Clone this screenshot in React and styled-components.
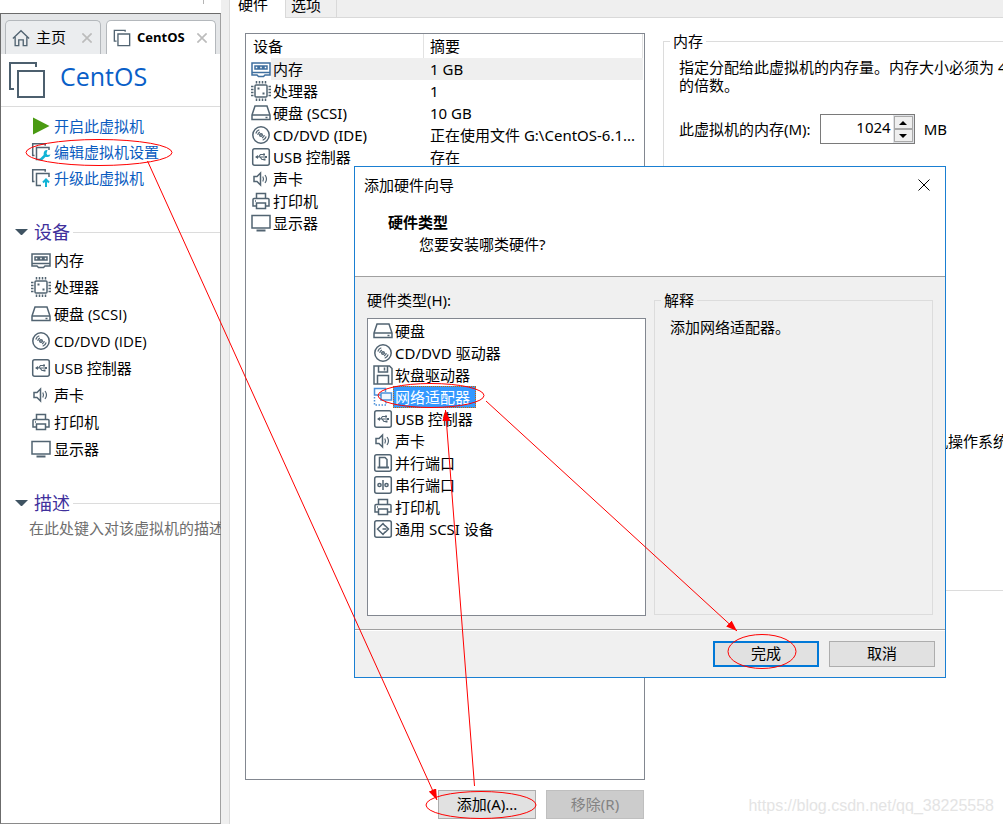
import React, { useState } from 'react'
import styled, { createGlobalStyle } from 'styled-components';

const GlobalStyle = createGlobalStyle`
    * {
        box-sizing: border-box;
    }
    body {
        margin: 0;
        background-color: #fff;
        color: #000;
        font-family: "Noto Sans", "Noto Sans CJK SC", sans-serif;
        font-size: 15px;
        line-height: 22px;
    }
    button, input {
        font: inherit;
        color: inherit;
    }
    ul {
        margin: 0;
        padding: 0;
        list-style: none;
    }
    svg {
        display: block;
        flex: none;
    }
`;

const Page = styled.div`
    display: flex;
    position: relative;
    min-height: 100vh;
    overflow: hidden;
`;

/* library window */

const Sidebar = styled.aside`
    flex: none;
    width: 221px;
    display: flex;
    flex-direction: column;
    overflow: hidden;
    font-family: "Open Sans", "Noto Sans CJK SC", sans-serif;
    white-space: nowrap;
`;

const TopStrip = styled.div`
    height: 13px;
    padding-left: 203px;
`;

const Tick = styled.div`
    width: 1px;
    height: 4px;
    background-color: #b5b5b5;
`;

const Library = styled.div`
    flex: 1;
    border: 1px solid #6b6b6b;
    border-right-color: #a0a0a0;
    border-bottom-color: #8a8a8a;
`;

const VmTabs = styled.div`
    display: flex;
    gap: 5px;
    height: 40px;
    padding: 6px 4px 0 4px;
    background-color: #e4e6e8;
`;

const VmTab = styled.div`
    flex: ${props => props.$active ? "1" : "none"};
    width: ${props => props.$active ? "auto" : "96px"};
    display: flex;
    align-items: center;
    padding: 0 8px 0 6px;
    border: 1px solid #b4b8bc;
    border-bottom: 0;
    border-radius: 5px 5px 0 0;
    background-color: ${props => props.$active ? "#fff" : "#ebedef"};
    font-weight: ${props => props.$active ? "bold" : "normal"};
    font-size: ${props => props.$active ? "13px" : "15px"};
`;

const TabLabel = styled.span`
    flex: 1;
    padding: 0 0 2px 6px;
`;

const IconButton = styled.button`
    display: flex;
    padding: 0;
    border: 0;
    background: none;
`;

const VmHeader = styled.div`
    display: flex;
    align-items: center;
    gap: 15px;
    height: 53px;
    padding: 0 8px;
    border-bottom: 1px solid #dcdcdc;
`;

const VmName = styled.h1`
    margin: 0;
    padding-bottom: 8px;
    color: #0a5fc8;
    font-size: 25px;
    font-weight: normal;
    line-height: 32px;
`;

const Actions = styled.nav`
    display: flex;
    flex-direction: column;
    padding: 6px 0 28px 30px;
`;

const Action = styled.a`
    display: flex;
    align-items: center;
    gap: 3px;
    height: 26px;
    color: #0a5cc0;
    text-decoration: none;
`;

const SectionHead = styled.h2`
    display: flex;
    align-items: center;
    gap: 6px;
    height: 26px;
    margin: 0;
    padding-left: 14px;
    color: #40309c;
    font-size: 18px;
    font-weight: normal;

    &::after {
        content: "";
        flex: 1;
        height: 1px;
        margin-left: -3px;
        background-color: #dcdcdc;
    }
`;

const DeviceSummary = styled.ul`
    padding: 1px 0 28px 30px;
`;

const SummaryRow = styled.li`
    display: flex;
    align-items: center;
    gap: 3px;
    height: 27px;
`;

const Notes = styled.p`
    margin: 0;
    padding: 1px 0 0 28px;
    color: #6e6e6e;
`;

const Gutter = styled.div`
    flex: none;
    width: 9px;
    border-right: 1px solid #dadada;
    background-color: #efefef;
`;

/* settings window */

const Settings = styled.main`
    flex: 1;
    min-width: 0;
    display: flex;
    flex-direction: column;
    overflow: hidden;
`;

const SettingsTabs = styled.div`
    display: flex;
    align-items: flex-end;
    height: 18px;
    overflow: hidden;
    background-color: #efefef;
    box-shadow: inset 0 -1px #d9d9d9;
`;

const SettingsTab = styled.button`
    flex: none;
    width: ${props => props.$active ? "56px" : "51px"};
    height: 24px;
    padding: 0 0 ${props => props.$active ? "4px 8px" : "1px 5px"};
    border: 0;
    border-right: 1px solid #d9d9d9;
    border-bottom: ${props => props.$active ? "0" : "1px solid #d9d9d9"};
    background-color: ${props => props.$active ? "#fff" : "#efefef"};
    line-height: 18px;
    text-align: left;
`;

const SettingsBody = styled.div`
    flex: 1;
    display: grid;
    grid-template-columns: 400px minmax(0, 1fr);
    gap: 18px;
    padding: 15px 0 5px 15px;
`;

const Devices = styled.div`
    display: flex;
    flex-direction: column;
    gap: 10px;
`;

const DeviceBox = styled.div`
    flex: 1;
    padding-right: 1px;
    border: 1px solid #828790;
`;

const DeviceTable = styled.table`
    width: 100%;
    border-collapse: separate;
    border-spacing: 0;
    table-layout: fixed;
`;

const HeadCell = styled.th`
    height: 24px;
    padding: 0 0 1px ${props => props.$first ? "7px" : "6px"};
    border-right: 1px solid #e2e2e2;
    font-weight: normal;
    line-height: 20px;
    text-align: left;
`;

const Cell = styled.td`
    height: 22px;
    padding: 0 0 0 ${props => props.$pad}px;
    background-color: ${props => props.$shaded ? "#efefef" : "transparent"};
    line-height: 20px;
    white-space: nowrap;
`;

const DeviceButtons = styled.div`
    display: flex;
    justify-content: flex-end;
    gap: 10px;
    padding-right: 1px;
`;

const Button = styled.button`
    width: ${props => props.$wide ? "106px" : "98px"};
    height: ${props => props.$wide ? "26px" : "29px"};
    padding: 0 0 2px;
    border: ${props => props.$primary ? "2px solid #0078d7" : "1px solid #adadad"};
    background-color: #e1e1e1;
    line-height: 20px;

    &:disabled {
        border-color: #bfbfbf;
        background-color: #cccccc;
        color: #838383;
    }
`;

const MemoryGroup = styled.fieldset`
    min-width: 0;
    height: 559px;
    margin: -1px -2px 0 0;
    padding: 8px 0 0 15px;
    border: 1px solid #dcdcdc;
    overflow: hidden;
    white-space: nowrap;
`;

const Legend = styled.legend`
    margin-left: -9px;
    padding: 0 3px;
    line-height: 18px;
`;

const MemoryText = styled.p`
    margin: 0;
    line-height: 18px;
`;

const MemoryRow = styled.div`
    display: flex;
    align-items: center;
    gap: 9px;
    margin-top: 20px;
`;

const Spinner = styled.div`
    display: flex;
    width: 95px;
    height: 30px;
    border: 1px solid #7a7a7a;
`;

const SpinnerInput = styled.input`
    flex: 1;
    min-width: 0;
    padding: 0 2px 4px 0;
    border: 0;
    outline: 0;
    text-align: right;
`;

const SpinnerButtons = styled.div`
    display: flex;
    flex-direction: column;
    width: 21px;
    padding: 1px;
    background-color: #dfe1e5;
`;

const SpinnerButton = styled.button`
    flex: 1;
    display: flex;
    align-items: center;
    justify-content: center;
    padding: 0;
    border: 1px solid #a9a9a9;
    background-color: #efefef;
`;

const GuestHint = styled.p`
    margin: 286px 0 0 224px;
`;

/* wizard */

const Dialog = styled.section`
    position: absolute;
    top: 166px;
    left: 354px;
    width: 592px;
    border: 1px solid #1a7fd2;
    background-color: #f0f0f0;
`;

const DialogHead = styled.header`
    height: 110px;
    border-bottom: 1px solid #a0a0a0;
    background-color: #fff;
`;

const TitleBar = styled.div`
    display: flex;
    align-items: center;
    justify-content: space-between;
    height: 36px;
    padding: 0 15px 0 9px;
`;

const DialogTitle = styled.span`
    padding-bottom: 1px;
    font-family: "Open Sans", "Noto Sans CJK SC", sans-serif;
`;

const StepTitle = styled.h2`
    margin: 8px 0 0 33px;
    font-size: 15px;
    line-height: 22px;
`;

const StepText = styled.p`
    margin: 0 0 0 64px;
`;

const DialogBody = styled.div`
    display: grid;
    grid-template-columns: 1fr 1fr;
    gap: 8px;
    padding: 12px 12px 13px;
    border-bottom: 1px solid #a0a0a0;
`;

const TypeColumn = styled.div`
    display: flex;
    flex-direction: column;
    gap: 7px;
`;

const TypeList = styled.ul`
    height: 298px;
    padding: 1px 0 0 5px;
    border: 1px solid #828790;
    background-color: #fff;
`;

const TypeItem = styled.li`
    display: flex;
    align-items: center;
    height: 22px;
    cursor: default;
`;

const TypeName = styled.span`
    height: 22px;
    padding: ${props => props.$selected ? "0 5px 0 1px" : "0 6px 0 2px"};
    border: ${props => props.$selected ? "1px dotted #cc6600" : "0"};
    background-color: ${props => props.$selected ? "#3399ff" : "transparent"};
    color: ${props => props.$selected ? "#fff" : "#000"};
    line-height: ${props => props.$selected ? "20px" : "22px"};
`;

const Explain = styled.fieldset`
    min-width: 0;
    margin: 2px 0 1px;
    padding: 7px 15px;
    border: 1px solid #dcdcdc;
`;

const DialogFoot = styled.footer`
    display: flex;
    justify-content: flex-end;
    gap: 10px;
    padding: 10px 10px;
    border-top: 1px solid #fff;
`;

const Marks = styled.svg`
    position: absolute;
    top: 0;
    left: 0;
    pointer-events: none;
`;

const Watermark = styled.span`
    position: absolute;
    right: 9px;
    bottom: 7px;
    color: #e4e4e4;
    font-family: "Liberation Sans", sans-serif;
    font-size: 16px;
`;

const shapes = {
    memory: <>
        <path d="M1 4h18v12h-5l-1.5 1.5h-5L6 16H1z" />
        <path d="M1 13.5h18" />
        <path d="M4 7h3v3H4zM8.5 7h3v3h-3zM13 7h3v3h-3z" />
    </>,
    cpu: <>
        <rect x="4" y="4" width="12" height="12" rx="1" />
        <path d="M5.5 0v2.5M8.5 0v2.5M11.5 0v2.5M14.5 0v2.5M5.5 17.5V20M8.5 17.5V20M11.5 17.5V20M14.5 17.5V20M0 5.5h2.5M0 8.5h2.5M0 11.500h2.5M0 14.5h2.5M17.5 5.5H20M17.5 8.5H20M17.5 11.5H20M17.5 14.5H20" />
        <path d="M6.5 7.5h2M11.5 12.500h2" strokeWidth="2" />
    </>,
    disk: <>
        <path d="M1 12 4 3h12l3 9v4.5H1z" />
        <path d="M1 12h18M14.5 14.5h2" />
    </>,
    cd: <>
        <circle cx="10" cy="10" r="8.2" />
        <circle cx="10" cy="10" r="1.3" />
        <path d="M4.8 8.5a5.500 5.500 0 0 1 3.500-3.700M15.200 11.500a5.500 5.500 0 0 1-3.500 3.700M6.800 10A3.200 3.200 0 0 1 9 7M13.200 10A3.200 3.200 0 0 1 11 13" strokeWidth="1.2" />
    </>,
    usb: <>
        <rect x="1.7" y="1.7" width="16.6" height="16.6" rx="2" />
        <path d="M5 10h9M7.500 10l2-2.500h2.500M9 10l2 2.500h2" strokeWidth="1.2" />
        <path d="M4 10l3-2v4zM14 9h2v2h-2zM12 6.500h2v2h-2zM12.500 11.500h2v2h-2z" fill="currentColor" strokeWidth="0" />
    </>,
    sound: <>
        <path d="M3 7.500h3L9.500 4v12L6 12.500H3z" />
        <path d="M11.800 7.500q1.400 2.500 0 5M14 6q3 4 0 8" strokeWidth="1.200" />
    </>,
    printer: <>
        <path d="M5.500 7V2.500h9V7M5.500 15H2V8.500q0-1 1-1h14q1 0 1 1V15h-3.500" />
        <rect x="5.500" y="12" width="9" height="5.500" />
        <path d="M4 10h1" />
    </>,
    monitor: <>
        <rect x="1" y="2.500" width="18" height="12.500" />
        <path d="M5.500 17.500h9" strokeWidth="2" />
    </>,
    floppy: <>
        <path d="M1 1h15.500L19 3.500V19H1z" />
        <path d="M5.500 1v6h9V1M11.500 2.500v3M4.500 19v-8.500h11V19" />
    </>,
    network: <g stroke="#4a90d9">
        <path d="M8 8H1.500V1.500h11V5" />
        <path d="M1.500 10v8h11.500v-3" strokeDasharray="1.500 1.500" />
        <rect x="8" y="6" width="10.500" height="7" fill="#eef5fc" />
    </g>,
    parallel: <>
        <rect x="1.700" y="1.700" width="16.600" height="16.600" rx="2" />
        <path d="M6.500 14V4.500h5.500l2 2V14" />
        <path d="M4.500 14.500h11.500" strokeWidth="2" />
    </>,
    serial: <>
        <rect x="1.700" y="1.700" width="16.600" height="16.600" rx="2" />
        <path d="M10 5v10" />
        <circle cx="6.500" cy="10" r="1.600" />
        <circle cx="13.500" cy="10" r="1.600" />
    </>,
    scsi: <>
        <rect x="1.700" y="1.700" width="16.600" height="16.600" rx="2" />
        <path d="M12 7l-2-2.500L4.500 10l5.500 5.500 2-2.500M9.500 10h4M12 6.500l3.500 3.500-3.500 3.500" />
    </>,
    play: <path d="M2 1.500v17L18.500 10z" fill="#4a9a12" stroke="none" />,
    edit: <>
        <path d="M3.500 13.500H1.700V1.700h12.500v2M10 17.500H5.500v-12h12.500V8" />
        <path d="M9.500 18l5-5" stroke="#12b4d6" strokeWidth="2.500" />
        <path d="M16.500 8a3.500 3.500 0 1 0 3 4.500l-3 .5-1-1.500z" fill="#12b4d6" stroke="none" />
    </>,
    upgrade: <>
        <path d="M3.500 13.500H1.700V1.700h12.500v2M10 17.500H5.500v-12h12.500V9" />
        <path d="M15 19v-7M12 14.500l3-3 3 3" stroke="#12b4d6" strokeWidth="2" />
    </>,
    vm: <path d="M4 13.500H1.500v-12h12V3M5.500 5.500h13v13h-13z" />,
    home: <path d="M1 10.500 10 2l9 8.500M3.500 9v9.500h4V12h5v6.500h4V9" />,
};

const Icon = ({ name, size = 20, color = "#526472" }) => (
    <svg width={size} height={size} viewBox="0 0 20 20" fill="none" color={color} stroke="currentColor" strokeWidth="1.5" aria-hidden="true">
        {shapes[name]}
    </svg>
)

const Cross = ({ size, color, width = 1 }) => (
    <svg width={size} height={size} viewBox="0 0 12 12" stroke={color} strokeWidth={width} aria-hidden="true">
        <path d="M0.5 0.5l11 11M11.5 0.5l-11 11" />
    </svg>
)

const Triangle = ({ up, width = 8, color = "#000" }) => (
    <svg width={width} height={width / 2} viewBox="0 0 8 4" fill={color} aria-hidden="true">
        <path d={up ? "M0 4h8L4 0z" : "M0 0h8L4 4z"} />
    </svg>
)

const devices = [
    { icon: "memory", name: "内存", summary: "1 GB" },
    { icon: "cpu", name: "处理器", summary: "1" },
    { icon: "disk", name: "硬盘 (SCSI)", summary: "10 GB" },
    { icon: "cd", name: "CD/DVD (IDE)", summary: "正在使用文件 G:\\CentOS-6.1..." },
    { icon: "usb", name: "USB 控制器", summary: "存在" },
    { icon: "sound", name: "声卡", summary: "" },
    { icon: "printer", name: "打印机", summary: "" },
    { icon: "monitor", name: "显示器", summary: "" },
];

const hardwareTypes = [
    { icon: "disk", name: "硬盘" },
    { icon: "cd", name: "CD/DVD 驱动器" },
    { icon: "floppy", name: "软盘驱动器" },
    { icon: "network", name: "网络适配器" },
    { icon: "usb", name: "USB 控制器" },
    { icon: "sound", name: "声卡" },
    { icon: "parallel", name: "并行端口" },
    { icon: "serial", name: "串行端口" },
    { icon: "printer", name: "打印机" },
    { icon: "scsi", name: "通用 SCSI 设备" },
];

const LibraryPanel = () => (
    <Sidebar>
        <TopStrip><Tick /></TopStrip>
        <Library>
            <VmTabs>
                <VmTab>
                    <Icon name="home" size={18} />
                    <TabLabel>主页</TabLabel>
                    <IconButton aria-label="关闭主页"><Cross size={10} color="#bcbcbc" width={2} /></IconButton>
                </VmTab>
                <VmTab $active>
                    <Icon name="vm" size={18} />
                    <TabLabel>CentOS</TabLabel>
                    <IconButton aria-label="关闭 CentOS"><Cross size={10} color="#bcbcbc" width={2} /></IconButton>
                </VmTab>
            </VmTabs>
            <VmHeader>
                <svg width="36" height="36" viewBox="0 0 36 36" fill="none" stroke="#4c5f6e" strokeWidth="2" aria-hidden="true">
                    <path d="M5 27H1V1h26v4M9 9h26v26H9z" />
                </svg>
                <VmName>CentOS</VmName>
            </VmHeader>
            <Actions>
                <Action href="#start"><Icon name="play" />开启此虚拟机</Action>
                <Action href="#edit"><Icon name="edit" />编辑虚拟机设置</Action>
                <Action href="#upgrade"><Icon name="upgrade" />升级此虚拟机</Action>
            </Actions>
            <SectionHead><Triangle width={13} color="#3f5362" />设备</SectionHead>
            <DeviceSummary>
                {devices.map(device => (
                    <SummaryRow key={device.icon}>
                        <Icon name={device.icon} />
                        {device.name}
                    </SummaryRow>
                ))}
            </DeviceSummary>
            <SectionHead><Triangle width={13} color="#3f5362" />描述</SectionHead>
            <Notes>在此处键入对该虚拟机的描述</Notes>
        </Library>
    </Sidebar>
)

const SettingsPanel = () => {
    const [memory, setMemory] = useState(1024);

    return (
        <Settings>
            <SettingsTabs role="tablist">
                <SettingsTab role="tab" aria-selected="true" $active>硬件</SettingsTab>
                <SettingsTab role="tab" aria-selected="false">选项</SettingsTab>
            </SettingsTabs>
            <SettingsBody>
                <Devices>
                    <DeviceBox>
                        <DeviceTable>
                            <colgroup>
                                <col width="25" />
                                <col width="153" />
                                <col />
                            </colgroup>
                            <thead>
                                <tr>
                                    <HeadCell colSpan="2" $first>设备</HeadCell>
                                    <HeadCell>摘要</HeadCell>
                                </tr>
                            </thead>
                            <tbody>
                                {devices.map((device, i) => (
                                    <tr key={device.icon}>
                                        <Cell $pad={5}>
                                            <Icon name={device.icon} color={i === 0 ? "#3f6f9f" : undefined} />
                                        </Cell>
                                        <Cell $pad={2} $shaded={i === 0}>{device.name}</Cell>
                                        <Cell $pad={6} $shaded={i === 0}>{device.summary}</Cell>
                                    </tr>
                                ))}
                            </tbody>
                        </DeviceTable>
                    </DeviceBox>
                    <DeviceButtons>
                        <Button>添加(A)...</Button>
                        <Button disabled>移除(R)</Button>
                    </DeviceButtons>
                </Devices>
                <MemoryGroup>
                    <Legend>内存</Legend>
                    <MemoryText>指定分配给此虚拟机的内存量。内存大小必须为 4 MB<br />的倍数。</MemoryText>
                    <MemoryRow>
                        <label htmlFor="memory">此虚拟机的内存(M):</label>
                        <Spinner>
                            <SpinnerInput id="memory" value={memory} onChange={e => setMemory(Number(e.target.value) || 0)} />
                            <SpinnerButtons>
                                <SpinnerButton aria-label="增加" onClick={() => setMemory(memory + 4)}><Triangle up /></SpinnerButton>
                                <SpinnerButton aria-label="减少" onClick={() => setMemory(memory - 4)}><Triangle /></SpinnerButton>
                            </SpinnerButtons>
                        </Spinner>
                        <span>MB</span>
                    </MemoryRow>
                    <GuestHint>客户机操作系统</GuestHint>
                </MemoryGroup>
            </SettingsBody>
        </Settings>
    )
}

const HardwareWizard = () => {
    const [selected, setSelected] = useState("network");
    const current = hardwareTypes.find(type => type.icon === selected);

    return (
        <Dialog role="dialog" aria-label="添加硬件向导">
            <DialogHead>
                <TitleBar>
                    <DialogTitle>添加硬件向导</DialogTitle>
                    <IconButton aria-label="关闭"><Cross size={12} color="#000" /></IconButton>
                </TitleBar>
                <StepTitle>硬件类型</StepTitle>
                <StepText>您要安装哪类硬件?</StepText>
            </DialogHead>
            <DialogBody>
                <TypeColumn>
                    <span id="types-label">硬件类型(H):</span>
                    <TypeList role="listbox" aria-labelledby="types-label">
                        {hardwareTypes.map(type => (
                            <TypeItem key={type.icon} role="option" aria-selected={type.icon === selected} onClick={() => setSelected(type.icon)}>
                                <Icon name={type.icon} />
                                <TypeName $selected={type.icon === selected}>{type.name}</TypeName>
                            </TypeItem>
                        ))}
                    </TypeList>
                </TypeColumn>
                <Explain>
                    <Legend>解释</Legend>
                    添加{current.name}。
                </Explain>
            </DialogBody>
            <DialogFoot>
                <Button $wide $primary>完成</Button>
                <Button $wide>取消</Button>
            </DialogFoot>
        </Dialog>
    )
}

const Annotations = () => (
    <Marks width="1003" height="824" viewBox="0 0 1003 824" fill="none" stroke="#f00" aria-hidden="true">
        <defs>
            <marker id="arrow" viewBox="0 0 11 8" refX="11" refY="4" markerWidth="11" markerHeight="8" orient="auto" markerUnits="userSpaceOnUse">
                <path d="M0 0l11 4-11 4z" fill="#f00" stroke="none" />
            </marker>
        </defs>
        <ellipse cx="99" cy="152.5" rx="73" ry="13" />
        <ellipse cx="481" cy="805" rx="55" ry="13.5" />
        <ellipse cx="431" cy="395.5" rx="53" ry="12" />
        <ellipse cx="762" cy="651.5" rx="34" ry="17" />
        <path d="M147.5 161 437 800" markerEnd="url(#arrow)" />
        <path d="M474.5 786 445.5 410" markerEnd="url(#arrow)" />
        <path d="M486 401 737 631" markerEnd="url(#arrow)" />
    </Marks>
)

const App = () => {
    return (
        <Page>
            <GlobalStyle />
            <LibraryPanel />
            <Gutter />
            <SettingsPanel />
            <HardwareWizard />
            <Watermark>https://blog.csdn.net/qq_38225558</Watermark>
            <Annotations />
        </Page>
    )
}

export default App;
